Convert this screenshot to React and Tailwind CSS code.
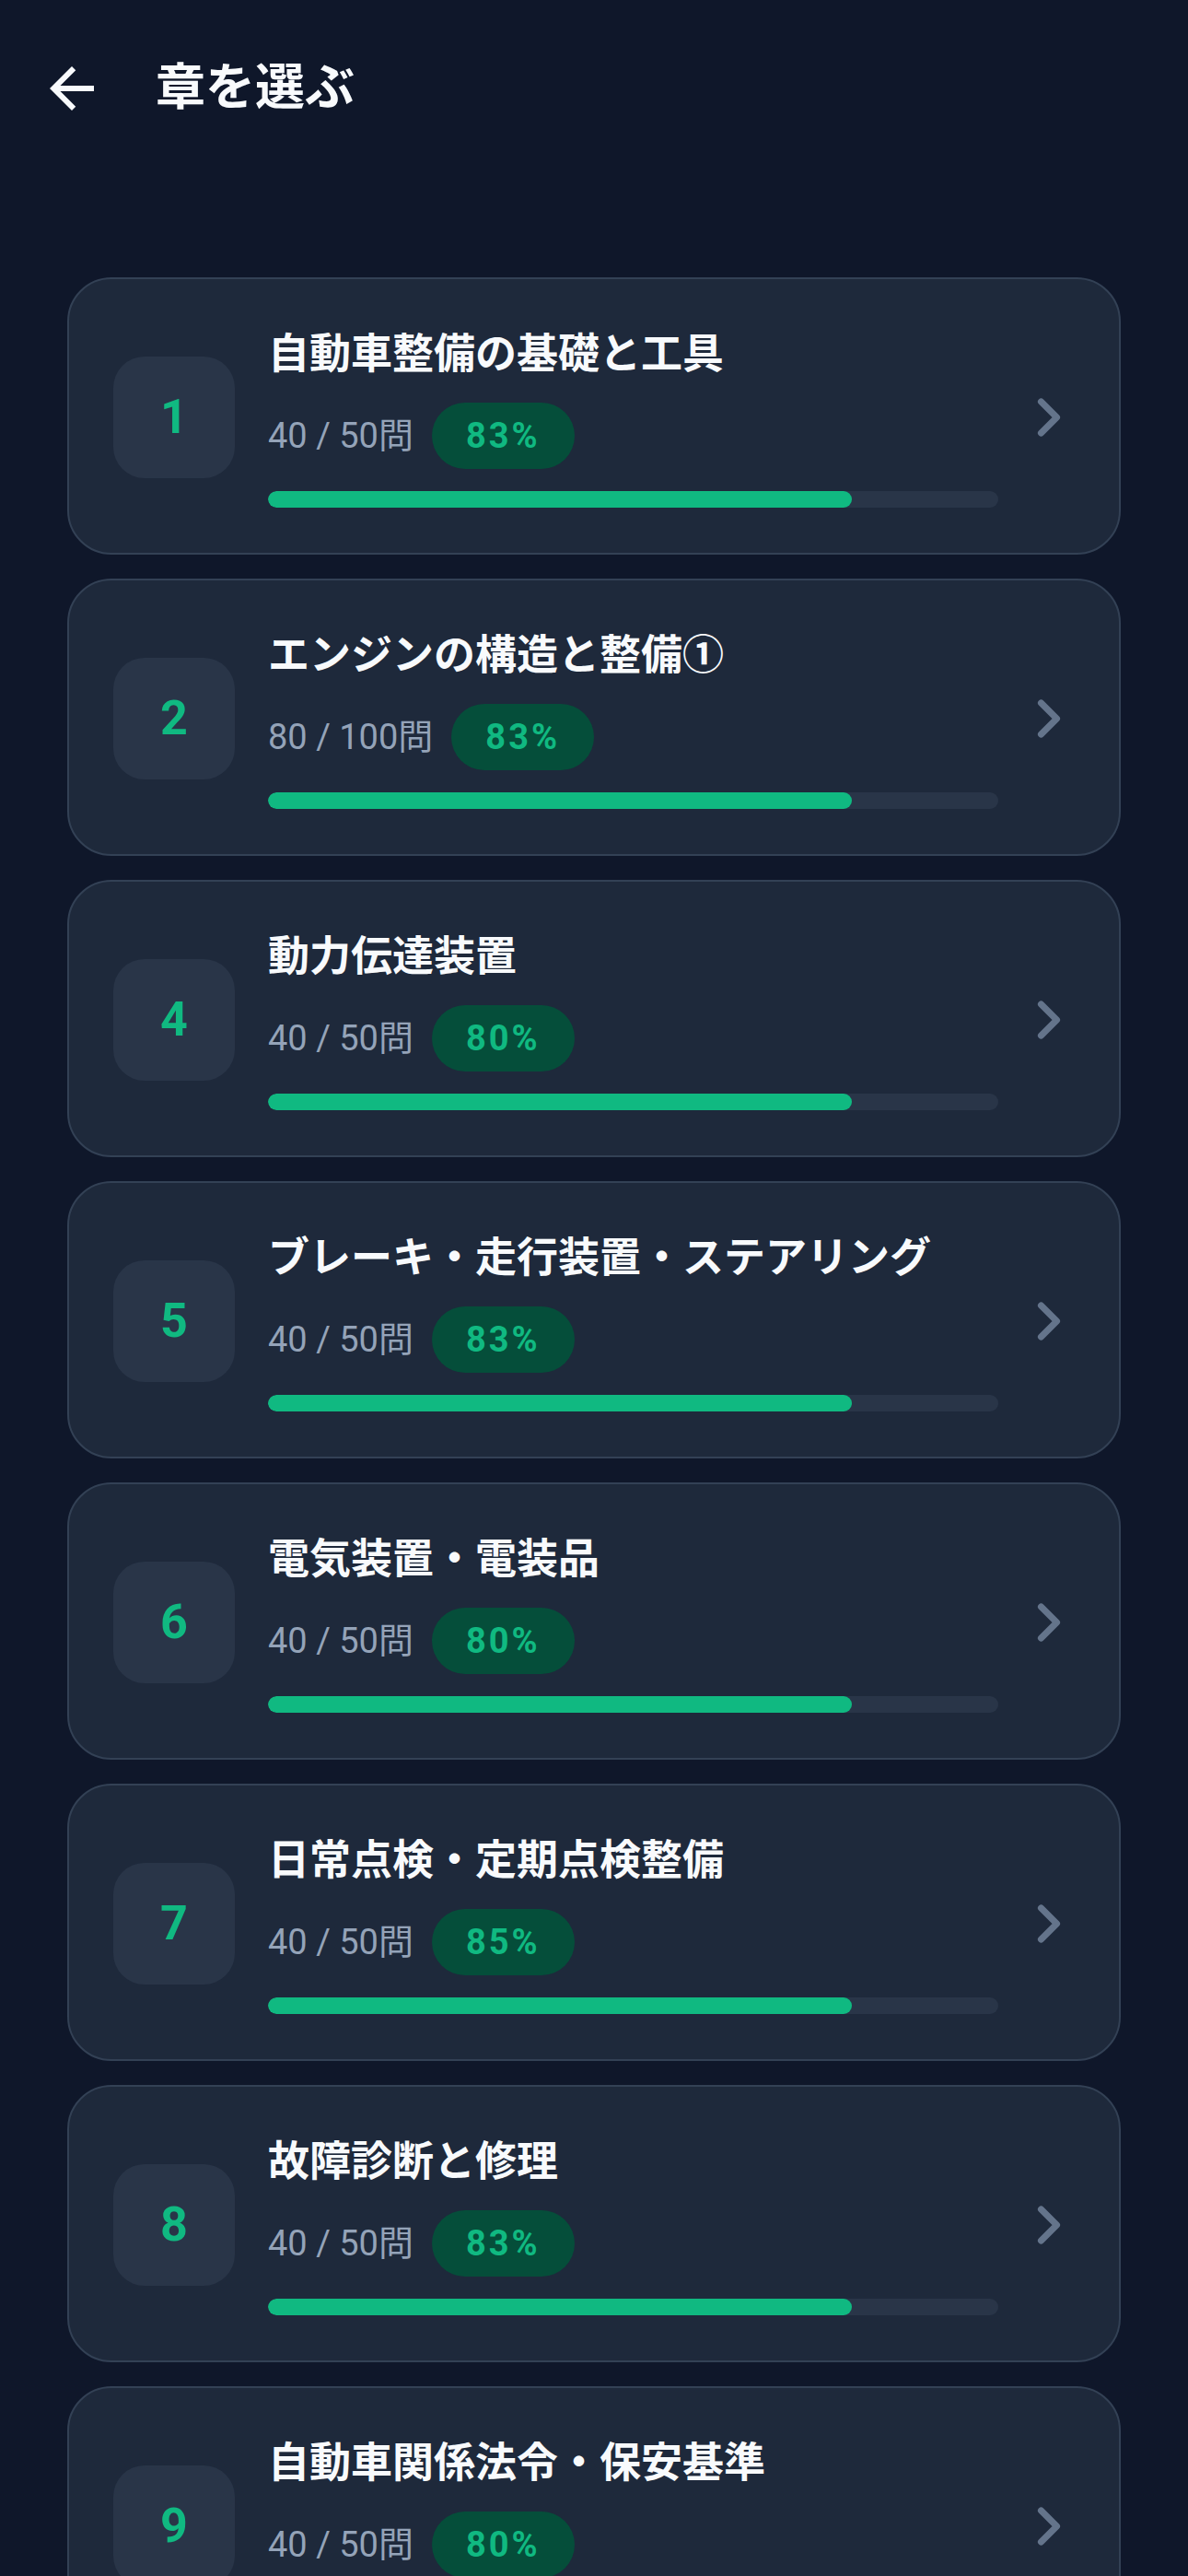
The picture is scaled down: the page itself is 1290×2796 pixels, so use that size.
import React from 'react';
import { MdArrowBack } from 'react-icons/md';
import { ChevronRight } from 'lucide-react';

const chapters = [
  { no: 1, title: '自動車整備の基礎と工具', done: 40, total: 50, rate: 83 },
  { no: 2, title: 'エンジンの構造と整備①', done: 80, total: 100, rate: 83 },
  { no: 4, title: '動力伝達装置', done: 40, total: 50, rate: 80 },
  { no: 5, title: 'ブレーキ・走行装置・ステアリング', done: 40, total: 50, rate: 83 },
  { no: 6, title: '電気装置・電装品', done: 40, total: 50, rate: 80 },
  { no: 7, title: '日常点検・定期点検整備', done: 40, total: 50, rate: 85 },
  { no: 8, title: '故障診断と修理', done: 40, total: 50, rate: 83 },
  { no: 9, title: '自動車関係法令・保安基準', done: 40, total: 50, rate: 80 },
];

const font = { fontFamily: 'Roboto, "Noto Sans CJK JP", sans-serif' };

const ChapterCard = ({ chapter }) => {
  // progress comes from answered / total
  const progress = (chapter.done / chapter.total) * 100;

  return (
    <div className="flex items-center bg-[#1e293b] border-2 border-[#334155] rounded-[48px] pl-[48px] pr-[42px] pt-[52px] pb-[49px]">
      <div className="w-[132px] h-[132px] shrink-0 rounded-[34px] bg-[#293548] flex items-center justify-center text-[52px] font-bold text-[#10b981]">
        {chapter.no}
      </div>

      <div className="flex-1 ml-[36px] mr-[21px] flex flex-col">
        <div className="text-[45px] leading-[60px] font-bold text-[#f8fafc] whitespace-nowrap">
          {chapter.title}
        </div>
        <div className="flex items-center gap-[20px] mt-[22px]">
          <span className="text-[38px] leading-[48px] text-[#94a3b8]">
            {chapter.done} / {chapter.total}問
          </span>
          <span className="h-[72px] px-[37px] rounded-full bg-[#054e3a] text-[#10b981] text-[38px] leading-[72px] font-bold tracking-[3px]">
            {chapter.rate}%
          </span>
        </div>
        <div className="mt-[24px] h-[18px] rounded-full bg-[#293548] overflow-hidden">
          <div className="h-full rounded-full bg-[#10b981]" style={{ width: `${progress}%` }} />
        </div>
      </div>

      <ChevronRight size={68} strokeWidth={2.5} className="shrink-0 text-[#64748b]" />
    </div>
  );
};

const App = () => {
  return (
    <div className="min-h-screen bg-[#0f172a]" style={font}>
      <div className="h-[192px] flex items-center pl-[42px]">
        <MdArrowBack size={72} className="text-[#f8fafc]" />
        <h1 className="ml-[55px] text-[54px] font-bold text-[#f8fafc] leading-none">章を選ぶ</h1>
      </div>

      <div className="px-[73px] pt-[109px] pb-[60px] flex flex-col gap-[26px]">
        {chapters.map((c) => (
          <ChapterCard key={c.no} chapter={c} />
        ))}
      </div>
    </div>
  );
};

export default App;
